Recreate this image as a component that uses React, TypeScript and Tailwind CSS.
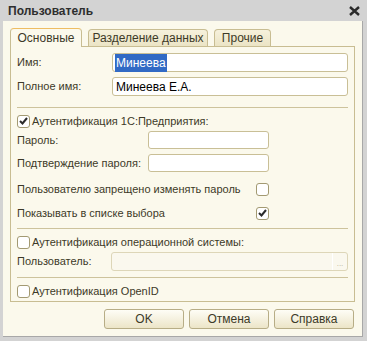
import React from 'react'

const font = { fontFamily: '"Liberation Sans", Arial, sans-serif' }

function Check({ checked }: { checked?: boolean }) {
  return (
    <span className="flex h-[13px] w-[13px] shrink-0 items-center justify-center rounded-[3px] border border-[#a39a72] bg-white">
      {checked && (
        <svg width="9" height="8" viewBox="0 0 9 8">
          <path d="M1 4 L3.5 6.5 L8 1" fill="none" stroke="#2b2b2b" strokeWidth="2" />
        </svg>
      )}
    </span>
  )
}

function Field({ value, selected, className = '' }: { value?: string; selected?: boolean; className?: string }) {
  return (
    <div className={`flex h-full items-center rounded-[3px] border border-[#c9bf96] bg-white px-[2px] text-[12px] text-black ${className}`}>
      {value && (selected ? <span className="bg-[#316ac5] px-[1px] text-white">{value}</span> : <span className="px-[1px]">{value}</span>)}
    </div>
  )
}

function Sep() {
  return <div className="h-px bg-[#cdc39c]" />
}

function Btn({ label }: { label: string }) {
  return (
    <button className="flex h-[20px] w-[80px] items-center justify-center rounded-[3px] border border-[#b7ad86] bg-gradient-to-b from-[#fefdf6] to-[#ece5c8] text-[12px] text-[#3d3a28]">
      {label}
    </button>
  )
}

export default function App() {
  return (
    <div style={font} className="flex h-[341px] w-[367px] flex-col whitespace-nowrap bg-[#d3d3d3] text-[11px] text-[#3d3a28]">
      <div className="flex h-[21px] shrink-0 items-center justify-between pl-[8px] pr-[7px]">
        <span className="text-[12px] font-bold text-[#2e2e2e]">Пользователь</span>
        <svg width="11" height="10" viewBox="0 0 11 10">
          <path d="M1 1 L10 9 M10 1 L1 9" stroke="#2a2a2a" strokeWidth="2.4" />
        </svg>
      </div>
      <div className="mb-[4px] ml-[3px] mr-[4px] flex flex-1 flex-col border-b border-r border-[#a8a8a8] bg-[#fbf9ec] px-[7px] pt-[7px]">
        <div className="flex h-[18px] items-end gap-[6px]">
          <div className="relative mb-[-1px] flex h-[19px] w-[72px] items-center justify-center rounded-t-[4px] border border-b-0 border-[#c8bd92] border-t-[#eebd62] bg-[#fbf9ec] text-[12px]">
            Основные
          </div>
          <div className="flex h-[17px] w-[120px] items-center justify-center rounded-t-[4px] border border-b-0 border-[#c8bd92] bg-gradient-to-b from-[#f6f1dc] to-[#ebe4c5] text-[12px]">
            Разделение данных
          </div>
          <div className="flex h-[17px] w-[57px] items-center justify-center rounded-t-[4px] border border-b-0 border-[#c8bd92] bg-gradient-to-b from-[#f6f1dc] to-[#ebe4c5] text-[12px]">
            Прочие
          </div>
        </div>
        <div className="flex flex-col border border-[#c8bd92] px-[6px] pb-[3px] pt-[6px]">
          <div className="flex h-[19px] items-center">
            <span className="w-[95px] shrink-0">Имя:</span>
            <Field value="Минеева" selected className="flex-1" />
          </div>
          <div className="mt-[5px] flex h-[19px] items-center">
            <span className="w-[95px] shrink-0">Полное имя:</span>
            <Field value="Минеева Е.А." className="flex-1" />
          </div>
          <div className="mt-[11px]"><Sep /></div>
          <div className="mt-[6px] flex h-[14px] items-center gap-[2px]">
            <Check checked />
            <span>Аутентификация 1С:Предприятия:</span>
          </div>
          <div className="mt-[3px] flex h-[18px] items-center">
            <span className="w-[131px] shrink-0">Пароль:</span>
            <Field className="w-[121px]" />
          </div>
          <div className="mt-[5px] flex h-[18px] items-center">
            <span className="w-[131px] shrink-0">Подтверждение пароля:</span>
            <Field className="w-[121px]" />
          </div>
          <div className="mt-[10px] flex h-[14px] items-center">
            <span className="w-[239px] shrink-0">Пользователю запрещено изменять пароль</span>
            <Check />
          </div>
          <div className="mt-[10px] flex h-[14px] items-center">
            <span className="w-[239px] shrink-0">Показывать в списке выбора</span>
            <Check checked />
          </div>
          <div className="mt-[8px]"><Sep /></div>
          <div className="mt-[6px] flex h-[14px] items-center gap-[2px]">
            <Check />
            <span>Аутентификация операционной системы:</span>
          </div>
          <div className="mt-[3px] flex h-[19px] items-center">
            <span className="w-[94px] shrink-0">Пользователь:</span>
            <div className="flex h-full flex-1 rounded-[3px] border border-[#ddd6b8] bg-[#faf8ee]">
              <div className="flex-1 border-r border-white" />
              <div className="flex w-[14px] items-end justify-center pb-[2px] text-[8px] leading-none text-[#b8b09a]">...</div>
            </div>
          </div>
          <div className="mt-[6px]"><Sep /></div>
          <div className="mt-[6px] flex h-[14px] items-center gap-[2px]">
            <Check />
            <span>Аутентификация OpenID</span>
          </div>
        </div>
        <div className="mt-[7px] flex justify-end gap-[5px] pr-[1px]">
          <Btn label="OK" />
          <Btn label="Отмена" />
          <Btn label="Справка" />
        </div>
      </div>
    </div>
  )
}
